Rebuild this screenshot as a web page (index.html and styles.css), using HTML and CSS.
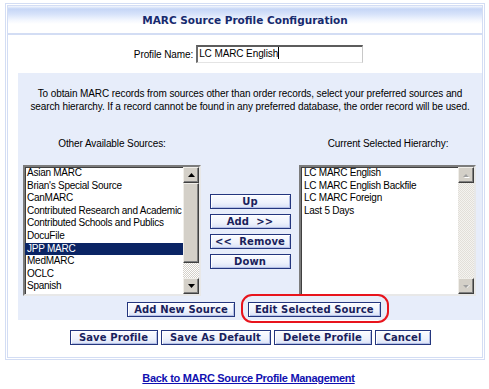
FILE: index.html
```html
<!DOCTYPE html>
<html lang="en">
<head>
    <meta charset="UTF-8">
    <title>MARC Source Profile Configuration</title>
    <link rel="stylesheet" href="styles.css">
</head>
<body>
    <div class="panel">
        <div class="panel-head">MARC Source Profile Configuration</div>

        <div class="profile-row">
            <label class="profile-label">Profile Name:</label>
            <div class="text-input">LC MARC English<span class="caret"></span></div>
        </div>

        <div class="source-box">
            <p class="intro">To obtain MARC records from sources other than order records, select your preferred sources and<br>search hierarchy. If a record cannot be found in any preferred database, the order record will be used.</p>

            <div class="list-heads">
                <div class="list-title">Other Available Sources:</div>
                <div class="list-title">Current Selected Hierarchy:</div>
            </div>

            <div class="lists">
                <div class="listbox">
                    <ul class="list-items">
                        <li>Asian MARC</li>
                        <li>Brian's Special Source</li>
                        <li>CanMARC</li>
                        <li>Contributed Research and Academic</li>
                        <li>Contributed Schools and Publics</li>
                        <li>DocuFile</li>
                        <li class="selected">JPP MARC</li>
                        <li>MedMARC</li>
                        <li>OCLC</li>
                        <li>Spanish</li>
                    </ul>
                    <div class="scrollbar">
                        <div class="sb-btn"><svg width="7" height="4" viewBox="0 0 7 4"><polygon points="3.5,0 7,4 0,4" fill="#000"/></svg></div>
                        <div class="sb-track"><div class="sb-thumb"></div></div>
                        <div class="sb-btn"><svg width="7" height="4" viewBox="0 0 7 4"><polygon points="0,0 7,0 3.5,4" fill="#000"/></svg></div>
                    </div>
                </div>

                <div class="move-col">
                    <button class="btn move-btn">Up</button>
                    <button class="btn move-btn">Add &nbsp;&gt;&gt;</button>
                    <button class="btn move-btn">&lt;&lt; &nbsp;Remove</button>
                    <button class="btn move-btn">Down</button>
                </div>

                <div class="listbox listbox-right">
                    <ul class="list-items">
                        <li>LC MARC English</li>
                        <li>LC MARC English Backfile</li>
                        <li>LC MARC Foreign</li>
                        <li>Last 5 Days</li>
                    </ul>
                    <div class="scrollbar disabled">
                        <div class="sb-btn"><svg width="8" height="5" viewBox="0 0 8 5"><polygon points="4,1 7,4 1,4" fill="#fff" transform="translate(1,1)"/><polygon points="4,0 7,3 1,3" fill="#a0a0a0" transform="translate(0,1)"/></svg></div>
                        <div class="sb-track"></div>
                        <div class="sb-btn"><svg width="8" height="5" viewBox="0 0 8 5"><polygon points="1,1 7,1 4,4" fill="#fff" transform="translate(1,0)"/><polygon points="1,0 7,0 4,3" fill="#a0a0a0" transform="translate(0,1)"/></svg></div>
                    </div>
                </div>
            </div>

            <div class="source-actions">
                <button class="btn">Add New Source</button>
                <div class="highlight">
                    <button class="btn">Edit Selected Source</button>
                    <span class="ring"></span>
                </div>
            </div>
        </div>

        <div class="profile-actions">
            <button class="btn btn-save">Save Profile</button>
            <button class="btn btn-default">Save As Default</button>
            <button class="btn btn-delete">Delete Profile</button>
            <button class="btn btn-cancel">Cancel</button>
        </div>
    </div>

    <div class="back-link"><a href="#">Back to MARC Source Profile Management</a></div>
</body>
</html>
```

FILE: styles.css
```css
body {
    margin: 0;
    background: #fff;
    font-family: "Liberation Sans", Arial, sans-serif;
    font-size: 10px;
    letter-spacing: -0.1px;
    color: #000;
}
.panel {
    margin: 3px 0 0 5px;
    width: 480px;
    box-sizing: border-box;
    border: 3px double #d3ddf4;
}
.panel-head {
    height: 29px;
    box-sizing: border-box;
    padding-top: 1px;
    border-bottom: 2px solid #d3ddf4;
    background: linear-gradient(to bottom, #f4f7fd 0, #c6d6f6 3px, #d6e2fa 8px, #f2f6fe 14px, #fff 18px, #fff 100%);
    text-align: center;
    line-height: 27px;
    font-family: "DejaVu Sans", Verdana, sans-serif;
    font-weight: bold;
    font-size: 10.5px;
    letter-spacing: 0;
    color: #172a6e;
}
.profile-row {
    display: flex;
    justify-content: center;
    align-items: center;
    gap: 3px;
    padding: 10px 0 10px 7px;
}
.text-input {
    width: 167px;
    height: 18px;
    box-sizing: border-box;
    border-style: solid;
    border-width: 2px 1px 1px 2px;
    border-color: #5c5c5c #c8c8c8 #e4e4e4 #6c6c6c;
    padding-left: 1px;
    line-height: 14px;
    background: #fff;
}
.caret {
    display: inline-block;
    width: 1px;
    height: 12px;
    background: #000;
    vertical-align: -2px;
}
.source-box {
    margin-left: 10px;
    background: #e7edfa;
    padding: 14px 0 3px 0;
}
.intro {
    margin: 0;
    text-align: center;
    line-height: 13px;
}
.list-heads {
    display: flex;
    margin-top: 24px;
    padding-left: 5px;
    gap: 98px;
    line-height: 13px;
}
.list-title {
    width: 178px;
    text-align: center;
}
.lists {
    display: grid;
    grid-template-columns: 178px 98px 177px;
    margin-top: 15px;
    padding-left: 5px;
}
.listbox {
    display: flex;
    height: 131px;
    box-sizing: border-box;
    border-style: solid;
    border-width: 2px;
    border-color: #7c7c7c #e8e8e8 #e8e8e8 #7c7c7c;
    box-shadow: inset 1px 1px #404040;
    background: #fff;
}
.list-items {
    flex: 1;
    margin: 0;
    padding: 0;
    list-style: none;
    line-height: 12.6px;
    letter-spacing: -0.25px;
    white-space: nowrap;
    overflow: hidden;
}
.list-items li {
    padding-left: 2px;
}
.list-items .selected {
    background: #0a2464;
    color: #fff;
}
.listbox-right .list-items li {
    padding-left: 3px;
}
.scrollbar {
    width: 16px;
    display: flex;
    flex-direction: column;
}
.sb-btn {
    height: 16px;
    box-sizing: border-box;
    display: flex;
    align-items: center;
    justify-content: center;
    background: #d4d0c8;
    border-style: solid;
    border-width: 1px;
    border-color: #f0eee9 #404040 #404040 #f0eee9;
    box-shadow: inset -1px -1px #808080;
}
.sb-track {
    flex: 1;
    background: repeating-conic-gradient(#d4d0c8 0 25%, #fff 0 50%) 0 0 / 2px 2px;
}
.sb-thumb {
    height: 80px;
    box-sizing: border-box;
    background: #d4d0c8;
    border-style: solid;
    border-width: 1px;
    border-color: #f0eee9 #404040 #404040 #f0eee9;
    box-shadow: inset -1px -1px #808080;
}
.disabled .sb-track {
    background: repeating-conic-gradient(#e2dfd9 0 25%, #f4f3f0 0 50%) 0 0 / 2px 2px;
}
.move-col {
    display: flex;
    flex-direction: column;
    align-items: center;
    justify-content: center;
    gap: 5px;
    padding-top: 1px;
}
.btn {
    height: 15px;
    box-sizing: border-box;
    margin: 0;
    padding: 0 6px;
    border: 1px solid #24367e;
    box-shadow: inset 1px 1px #fff, inset -1px -1px #b4c0e6;
    background: linear-gradient(to bottom, #fbfcff 0, #eef2fc 60%, #d9e1f6 100%);
    font-family: "DejaVu Sans", Verdana, sans-serif;
    font-weight: bold;
    font-size: 10px;
    line-height: 13px;
    color: #1a1f5c;
    letter-spacing: 0.1px;
    white-space: nowrap;
    cursor: pointer;
}
.move-btn {
    width: 81px;
    padding: 0;
}
.btn-save {
    width: 88px;
}
.btn-default {
    width: 110px;
}
.btn-delete {
    width: 98px;
}
.btn-cancel {
    width: 56px;
}
.source-actions {
    display: flex;
    justify-content: center;
    gap: 13px;
    margin-top: 6px;
    padding-left: 8px;
}
.highlight {
    position: relative;
    display: flex;
}
.ring {
    position: absolute;
    left: -7px;
    right: -8px;
    top: -8px;
    bottom: -6px;
    border: 2px solid #e8141c;
    border-radius: 11px;
    pointer-events: none;
}
.profile-actions {
    display: flex;
    justify-content: center;
    gap: 3px;
    padding: 10px 0 12px 10px;
}
.back-link {
    margin-top: 12px;
    text-align: center;
    padding-left: 8px;
    line-height: 13px;
}
.back-link a {
    font-family: "Liberation Sans", Arial, sans-serif;
    font-weight: bold;
    font-size: 11px;
    color: #1010b0;
    letter-spacing: -0.3px;
}
```
